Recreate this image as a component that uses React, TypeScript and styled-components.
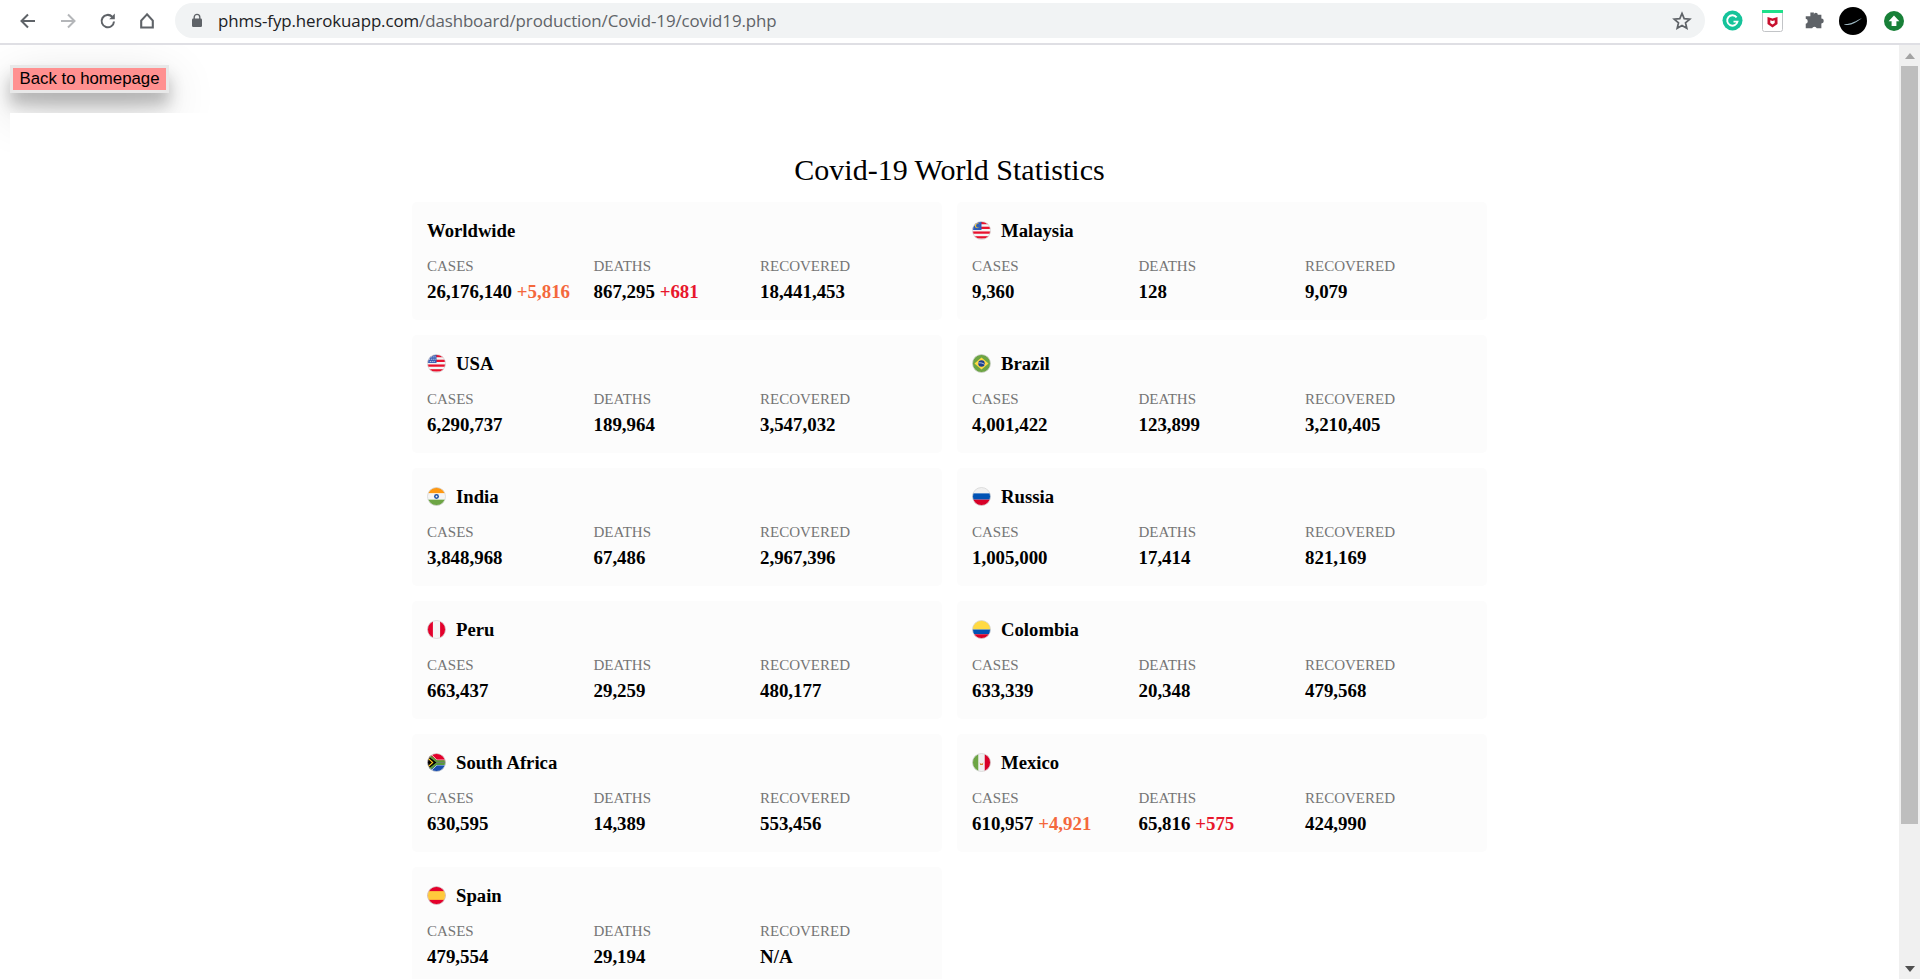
import React from 'react';
import styled, { createGlobalStyle } from 'styled-components';

const GlobalStyle = createGlobalStyle`
  html, body {
    margin: 0;
    padding: 0;
    height: 100%;
    overflow: hidden;
    background: #fff;
  }
  * {
    box-sizing: border-box;
  }
`;

const Screen = styled.div`
  width: 1920px;
  height: 979px;
  display: flex;
  flex-direction: column;
  overflow: hidden;
`;

const Toolbar = styled.div`
  height: 45px;
  flex: none;
  display: flex;
  align-items: center;
  padding: 0 0 2px 16px;
  background: #fff;
  border-bottom: 2px solid #dfdfe4;
`;

const NavButton = styled.div`
  width: 24px;
  height: 24px;
  margin-right: 16px;
  display: flex;
  align-items: center;
  justify-content: center;
  flex: none;
`;

const ArrowSvg = styled.svg<{ $flip?: boolean }>`
  transform: ${({ $flip }) => ($flip ? 'scaleX(-1)' : 'none')};
`;

const HomeSvg = styled.svg`
  margin-left: -2px;
`;

const Omnibox = styled.div`
  width: 1530px;
  height: 35px;
  margin-left: -1px;
  padding: 0 13px 0 16px;
  display: flex;
  align-items: center;
  flex: none;
  background: #f1f3f4;
  border-radius: 18px;
`;

const UrlText = styled.div`
  flex: 1;
  margin-left: 15px;
  font: 16.9px "Open Sans", sans-serif;
  letter-spacing: -0.1px;
  color: #5f6368;
  white-space: nowrap;
`;

const UrlHost = styled.span`
  color: #202124;
`;

const Extensions = styled.div`
  display: flex;
  align-items: center;
  margin-left: 7px;
`;

const ExtensionSlot = styled.div`
  width: 40.4px;
  height: 30px;
  display: flex;
  align-items: center;
  justify-content: center;
`;

const Body = styled.div`
  flex: 1;
  min-height: 0;
  display: flex;
`;

const Page = styled.div`
  flex: 1;
  min-width: 0;
  overflow: hidden;
  padding: 20px 0 0 10px;
`;

const BackLink = styled.a`
  display: block;
  width: 159px;
  height: 28px;
  background: #ff9090;
  border: 3px solid #e8e8e8;
  box-shadow: 0 12px 16px rgba(0, 0, 0, 0.24), 0 17px 50px rgba(0, 0, 0, 0.19);
  font: 16.8px/21px "Liberation Sans", sans-serif;
  color: #000;
  text-align: center;
  white-space: nowrap;
`;

const Content = styled.div`
  position: relative;
  margin-top: 20px;
  padding: 39px 0 0 402px;
  background: #fff;
`;

const Title = styled.h1`
  width: 1075px;
  margin: 0 0 14px;
  font: 400 30px/36px "Liberation Serif", serif;
  color: #000;
  text-align: center;
`;

const CardGrid = styled.div`
  width: 1075px;
  display: grid;
  grid-template-columns: 530px 530px;
  column-gap: 15px;
  row-gap: 15px;
`;

const Card = styled.div`
  height: 118px;
  padding: 15px 15px 0;
  background: #fcfcfc;
  border-radius: 5px;
`;

const CardHeader = styled.div`
  height: 27px;
  display: flex;
  align-items: center;
  gap: 10px;
  margin-bottom: 12px;
`;

const CardName = styled.span`
  font: 700 18.7px/27px "Liberation Serif", serif;
  color: #000;
`;

const StatRow = styled.div`
  display: grid;
  grid-template-columns: repeat(3, 166.5px);
`;

const StatLabel = styled.div`
  font: 400 15px/20px "Liberation Serif", serif;
  color: #757575;
`;

const StatValue = styled.div`
  margin-top: 5px;
  font: 700 18.9px/21px "Liberation Serif", serif;
  color: #000;
  white-space: nowrap;
`;

const Delta = styled.span<{ $tone: 'cases' | 'deaths' }>`
  color: ${({ $tone }) => ($tone === 'cases' ? '#f4683c' : '#e8172c')};
`;

const Scrollbar = styled.div`
  width: 21px;
  flex: none;
  display: flex;
  flex-direction: column;
  align-items: center;
  background: #f0f0f0;
`;

const ScrollArrow = styled.div`
  height: 21px;
  flex: none;
  display: flex;
  align-items: center;
  justify-content: center;
`;

const ScrollThumb = styled.div`
  width: 17px;
  height: 758px;
  flex: none;
  background: #bebebe;
`;

const ScrollSpacer = styled.div`
  flex: 1;
`;

const FlagSvg = ({ children }: { children: React.ReactNode }) => (
  <svg width="19" height="19" viewBox="0 0 20 20">
    <defs>
      <clipPath id="flagClip">
        <circle cx="10" cy="10" r="9.5" />
      </clipPath>
    </defs>
    <g clipPath="url(#flagClip)">{children}</g>
    <circle cx="10" cy="10" r="9.5" fill="none" stroke="#d5d5d5" strokeWidth="0.8" />
  </svg>
);

const Stripes = () => (
  <>
    <rect width="20" height="20" fill="#f5f5f5" />
    <rect y="1" width="20" height="2.4" fill="#e8112d" />
    <rect y="6" width="20" height="2.4" fill="#e8112d" />
    <rect y="11" width="20" height="2.4" fill="#e8112d" />
    <rect y="16" width="20" height="2.4" fill="#e8112d" />
  </>
);

const flags: Record<string, React.ReactNode> = {
  USA: (
    <>
      <Stripes />
      <rect width="10" height="9.5" fill="#3a5fb5" />
      <path d="M2 3h7M2 5.5h7M3 8h6" stroke="#fff" strokeWidth="0.9" strokeDasharray="1 1" />
    </>
  ),
  Malaysia: (
    <>
      <Stripes />
      <rect width="10" height="9.5" fill="#2e5cb8" />
      <circle cx="5.5" cy="5" r="2.6" fill="#f7c92c" />
      <circle cx="6.4" cy="5" r="2.2" fill="#2e5cb8" />
    </>
  ),
  Brazil: (
    <>
      <rect width="20" height="20" fill="#6da544" />
      <path d="M10 3.6 17.4 10 10 16.4 2.6 10Z" fill="#ffda44" />
      <circle cx="10" cy="10" r="3.4" fill="#1e3f8f" />
      <path d="M6.8 9.4c2.4-.4 4.8.2 6.4 1.6" stroke="#fff" strokeWidth="0.7" fill="none" />
    </>
  ),
  India: (
    <>
      <rect width="20" height="6.7" fill="#ff9811" />
      <rect y="6.7" width="20" height="6.6" fill="#f5f5f5" />
      <rect y="13.3" width="20" height="6.7" fill="#6da544" />
      <circle cx="10" cy="10" r="2.6" fill="#1e4fa3" />
      <circle cx="10" cy="10" r="1" fill="#f5f5f5" />
    </>
  ),
  Russia: (
    <>
      <rect width="20" height="6.7" fill="#f0f0f0" />
      <rect y="6.7" width="20" height="6.6" fill="#0052b4" />
      <rect y="13.3" width="20" height="6.7" fill="#d80027" />
    </>
  ),
  Peru: (
    <>
      <rect width="20" height="20" fill="#f5f5f5" />
      <rect width="6.2" height="20" fill="#e4002b" />
      <rect x="13.8" width="6.2" height="20" fill="#e4002b" />
    </>
  ),
  Colombia: (
    <>
      <rect width="20" height="10" fill="#ffda44" />
      <rect y="10" width="20" height="5" fill="#0052b4" />
      <rect y="15" width="20" height="5" fill="#d80027" />
    </>
  ),
  'South Africa': (
    <>
      <rect width="20" height="10" fill="#e4002b" />
      <rect y="10" width="20" height="10" fill="#1a4fb0" />
      <path d="M0 0 10 10 0 20Z" fill="#000" />
      <path d="M2 -1 10.5 7.4H21v5.2H10.5L2 21" fill="none" stroke="#fff" strokeWidth="0.8" />
      <path d="M0 1 10 8.6H20v2.8H10L0 19" fill="none" stroke="#5b9a3c" strokeWidth="2.2" />
      <path d="M0 4.5 6 10 0 15.5" fill="none" stroke="#ffc61e" strokeWidth="1.2" />
    </>
  ),
  Mexico: (
    <>
      <rect width="20" height="20" fill="#f0f0f0" />
      <rect width="6.6" height="20" fill="#6da544" />
      <rect x="13.4" width="6.6" height="20" fill="#d80027" />
      <path d="M8 9.5c.5 2.4 3.4 2.6 4 0l-.6 3H8.6Z" fill="#d9822b" />
    </>
  ),
  Spain: (
    <>
      <rect width="20" height="20" fill="#e4002b" />
      <rect y="5.4" width="20" height="9.2" fill="#ffc93c" />
    </>
  ),
};

type Country = {
  name: string;
  cases: string;
  deaths: string;
  recovered: string;
  newCases?: string;
  newDeaths?: string;
};

const countries: Country[] = [
  { name: 'Worldwide', cases: '26,176,140', newCases: '+5,816', deaths: '867,295', newDeaths: '+681', recovered: '18,441,453' },
  { name: 'Malaysia', cases: '9,360', deaths: '128', recovered: '9,079' },
  { name: 'USA', cases: '6,290,737', deaths: '189,964', recovered: '3,547,032' },
  { name: 'Brazil', cases: '4,001,422', deaths: '123,899', recovered: '3,210,405' },
  { name: 'India', cases: '3,848,968', deaths: '67,486', recovered: '2,967,396' },
  { name: 'Russia', cases: '1,005,000', deaths: '17,414', recovered: '821,169' },
  { name: 'Peru', cases: '663,437', deaths: '29,259', recovered: '480,177' },
  { name: 'Colombia', cases: '633,339', deaths: '20,348', recovered: '479,568' },
  { name: 'South Africa', cases: '630,595', deaths: '14,389', recovered: '553,456' },
  { name: 'Mexico', cases: '610,957', newCases: '+4,921', deaths: '65,816', newDeaths: '+575', recovered: '424,990' },
  { name: 'Spain', cases: '479,554', deaths: '29,194', recovered: 'N/A' },
];

const CountryCard = ({ country }: { country: Country }) => (
  <Card>
    <CardHeader>
      {flags[country.name] && <FlagSvg>{flags[country.name]}</FlagSvg>}
      <CardName>{country.name}</CardName>
    </CardHeader>
    <StatRow>
      <div>
        <StatLabel>CASES</StatLabel>
        <StatValue>
          {country.cases} {country.newCases && <Delta $tone="cases">{country.newCases}</Delta>}
        </StatValue>
      </div>
      <div>
        <StatLabel>DEATHS</StatLabel>
        <StatValue>
          {country.deaths} {country.newDeaths && <Delta $tone="deaths">{country.newDeaths}</Delta>}
        </StatValue>
      </div>
      <div>
        <StatLabel>RECOVERED</StatLabel>
        <StatValue>{country.recovered}</StatValue>
      </div>
    </StatRow>
  </Card>
);

const ArrowIcon = ({ flip, color }: { flip?: boolean; color: string }) => (
  <ArrowSvg $flip={flip} width="20" height="20" viewBox="0 0 20 20">
    <path d="M17 10H4M10 3.5 3.5 10l6.5 6.5" fill="none" stroke={color} strokeWidth="2" />
  </ArrowSvg>
);

const App = () => (
  <Screen>
    <GlobalStyle />
    <Toolbar>
      <NavButton>
        <ArrowIcon color="#5f6368" />
      </NavButton>
      <NavButton>
        <ArrowIcon flip color="#b4b6b9" />
      </NavButton>
      <NavButton>
        <svg width="20" height="20" viewBox="0 0 20 20">
          <path d="M16 10.5a6.2 6.2 0 1 1-1.8-4.8" fill="none" stroke="#5f6368" strokeWidth="2" />
          <path d="M16.8 2.6v5.6h-5.6Z" fill="#5f6368" />
        </svg>
      </NavButton>
      <NavButton>
        <HomeSvg width="20" height="20" viewBox="0 0 20 20">
          <path d="M10 3.4 4.2 9.6V16.5h11.6V9.6Z" fill="none" stroke="#5f6368" strokeWidth="2.1" />
        </HomeSvg>
      </NavButton>
      <Omnibox>
        <svg width="12" height="15" viewBox="0 0 12 15">
          <path d="M3.2 6V4.2a2.8 2.8 0 0 1 5.6 0V6" fill="none" stroke="#5f6368" strokeWidth="1.4" />
          <rect x="1" y="5.6" width="10" height="8.4" rx="1.2" fill="#5f6368" />
        </svg>
        <UrlText>
          <UrlHost>phms-fyp.herokuapp.com</UrlHost>/dashboard/production/Covid-19/covid19.php
        </UrlText>
        <svg width="20" height="20" viewBox="0 0 20 20">
          <path
            d="M10 2.4 12.2 7.6 17.8 8.1 13.5 11.8 14.8 17.3 10 14.4 5.2 17.3 6.5 11.8 2.2 8.1 7.8 7.6Z"
            fill="none"
            stroke="#5f6368"
            strokeWidth="1.7"
          />
        </svg>
      </Omnibox>
      <Extensions>
        <ExtensionSlot>
          <svg width="21" height="21" viewBox="0 0 21 21">
            <circle cx="10.5" cy="10.5" r="10" fill="#15c39a" />
            <path d="M14.6 7.4a5.2 5.2 0 1 0 .9 4.2h-4" fill="none" stroke="#fff" strokeWidth="1.9" />
          </svg>
        </ExtensionSlot>
        <ExtensionSlot>
          <svg width="21" height="22" viewBox="0 0 21 22">
            <rect x="0.5" y="0.5" width="20" height="21" rx="2" fill="#fff" stroke="#c2c4c7" />
            <rect width="21" height="3" fill="#1fe08a" />
            <path d="M5.5 7 10.5 8.6 15.5 7V14l-5 3.4-5-3.4Z" fill="#c8102e" />
            <path d="M8.3 10.3 10.5 11.1 12.7 10.3V13l-2.2 1.4-2.2-1.4Z" fill="#fff" />
          </svg>
        </ExtensionSlot>
        <ExtensionSlot>
          <svg width="22" height="22" viewBox="0 0 20 20">
            <path
              d="M7.6 2.2h3.2v2.2a1.8 1.8 0 0 1 3.6 0v-.1h3.2v3.5a2.2 2.2 0 0 1 0 4.4v4.5h-4.2a2.2 2.2 0 0 0-4.2 0H3.4v-4.2a2.3 2.3 0 0 0 0-4.5V5.6h4.2Z"
              fill="#5f6368"
            />
          </svg>
        </ExtensionSlot>
        <ExtensionSlot>
          <svg width="28" height="28" viewBox="0 0 28 28">
            <circle cx="14" cy="14" r="14" fill="#000" />
            <path d="M5 17c6 .6 12-3 18-6-5 4-10 7-14 7-2 0-3.600-.4-4-1Z" fill="#9fbac4" />
          </svg>
        </ExtensionSlot>
        <ExtensionSlot>
          <svg width="20" height="20" viewBox="0 0 20 20">
            <circle cx="10" cy="10" r="10" fill="#188038" />
            <path d="M10 4.4 15.4 10.2H12.4V15H7.6V10.2H4.6Z" fill="#fff" />
          </svg>
        </ExtensionSlot>
      </Extensions>
    </Toolbar>
    <Body>
      <Page>
        <BackLink>Back to homepage</BackLink>
        <Content>
          <Title>Covid-19 World Statistics</Title>
          <CardGrid>
            {countries.map((country) => (
              <CountryCard key={country.name} country={country} />
            ))}
          </CardGrid>
        </Content>
      </Page>
      <Scrollbar>
        <ScrollArrow>
          <svg width="10" height="6" viewBox="0 0 10 6">
            <path d="M5 0 10 6H0Z" fill="#a3a3a3" />
          </svg>
        </ScrollArrow>
        <ScrollThumb />
        <ScrollSpacer />
        <ScrollArrow>
          <svg width="10" height="6" viewBox="0 0 10 6">
            <path d="M0 0H10L5 6Z" fill="#505050" />
          </svg>
        </ScrollArrow>
      </Scrollbar>
    </Body>
  </Screen>
);

export default App;
